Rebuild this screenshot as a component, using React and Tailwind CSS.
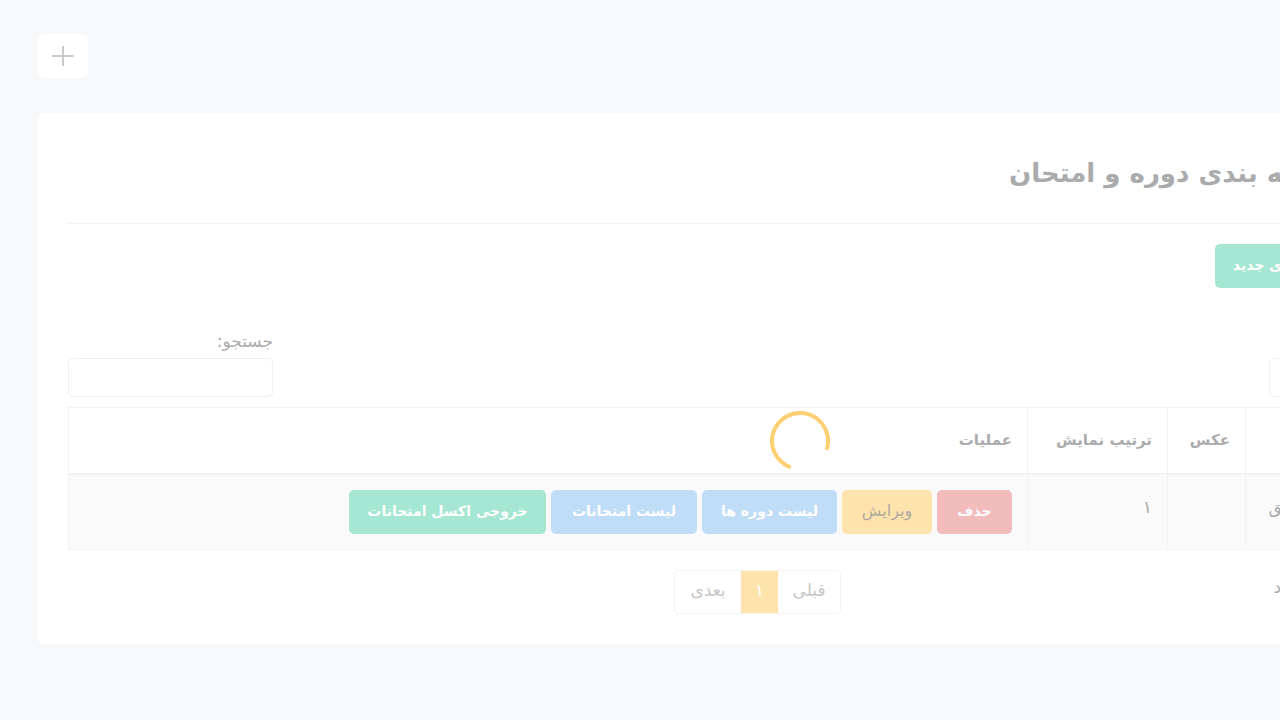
import { useState } from "react";

const actions = [
  { label: "حذف", width: "w-[75px]", color: "bg-[#f2bbbc] text-sm text-white font-bold" },
  { label: "ویرایش", width: "w-[90px]", color: "bg-[#ffe3ad] text-base text-[#aca89f]" },
  { label: "لیست دوره ها", width: "w-[135px]", color: "bg-[#c0ddf8] text-sm text-white font-bold" },
  { label: "لیست امتحانات", width: "w-[146px]", color: "bg-[#c0ddf8] text-sm text-white font-bold" },
  { label: "خروجی اکسل امتحانات", width: "w-[197px]", color: "bg-[#a5e7d2] text-sm text-white font-bold" },
];

function Spinner() {
  return (
    <div className="fixed left-[770px] top-[411px]" role="status" aria-label="loading">
      <svg width="60" height="60" viewBox="0 0 60 60" fill="none" stroke="#ffcf74" strokeWidth="4">
        <path d="M20.8 56.4 A28 28 0 1 1 56.6 38.8" />
      </svg>
    </div>
  );
}

function ActionButton({ label, width, color }) {
  return (
    <button type="button" className={`h-11 shrink-0 rounded-[5px] pb-0.5 whitespace-nowrap ${width} ${color}`}>
      {label}
    </button>
  );
}

export default function App() {
  const [search, setSearch] = useState("");

  return (
    <div className="min-h-screen overflow-hidden bg-[#f7f8fa] font-['DejaVu_Sans',sans-serif] text-[17px] text-[#a9abac]">
      <main dir="rtl" className="ml-[38px] mr-[-90px] pt-[34px]">
        <div className="flex justify-end">
          <button type="button" aria-label="منو" className="flex h-11 w-[50px] items-center justify-center rounded-[5px] bg-white">
            <svg width="22" height="22" viewBox="0 0 22 22" stroke="#c9cbcc" strokeWidth="2">
              <path d="M11 1V21M0 11H22" />
            </svg>
          </button>
        </div>

        <section className="mt-[35px] rounded-[5px] bg-white p-[30px]">
          <h1 className="border-b border-[#f3f3f4] pt-[10px] pr-2 pb-[30px] text-[26px] leading-10 font-bold whitespace-nowrap">
            دسته بندی دوره و امتحان
          </h1>

          <button type="button" className="mt-5 block h-11 w-[125px] rounded-[5px] bg-[#a5e7d2] pb-0.5 text-sm font-bold whitespace-nowrap text-white">
            دسته ی جدید
          </button>

          <div className="mt-9 flex items-end justify-between">
            <select aria-label="تعداد نمایش" className="h-[39px] w-[71px] appearance-none rounded-[5px] border border-[#efefef] bg-white px-3">
              <option>۱۰</option>
            </select>
            <label className="flex w-[205px] flex-col leading-[34px]">
              جستجو:
              <input
                type="search"
                value={search}
                onChange={(e) => setSearch(e.target.value)}
                className="h-[39px] rounded-[5px] border border-[#efefef] bg-white px-3 outline-none"
              />
            </label>
          </div>

          <table className="mt-[10px] w-full table-fixed border-collapse border border-[#f2f2f3] text-right">
            <colgroup>
              <col className="w-[94px]" />
              <col className="w-[78px]" />
              <col className="w-[140px]" />
              <col />
            </colgroup>
            <thead>
              <tr className="h-[66px] border-b-2 border-[#f2f2f3] text-[15px] whitespace-nowrap">
                <th className="border-x border-[#f2f2f3] px-[15px]">نام</th>
                <th className="border-x border-[#f2f2f3] px-[15px]">عکس</th>
                <th className="border-x border-[#f2f2f3] px-[15px]">ترتیب نمایش</th>
                <th className="border-x border-[#f2f2f3] px-[15px]">عملیات</th>
              </tr>
            </thead>
            <tbody>
              <tr className="bg-[#fafafa] align-top leading-[34px]">
                <td className="border-x border-[#f2f2f3] px-[15px] py-[15px] whitespace-nowrap">مصادیق</td>
                <td className="border-x border-[#f2f2f3] px-[15px] py-[15px]"></td>
                <td className="border-x border-[#f2f2f3] px-[15px] py-[15px]">۱</td>
                <td className="border-x border-[#f2f2f3] px-[15px] py-[15px]">
                  <div className="flex gap-[5px]">
                    {actions.map((action) => (
                      <ActionButton key={action.label} {...action} />
                    ))}
                  </div>
                </td>
              </tr>
            </tbody>
          </table>

          <div className="mt-5 flex">
            <p className="w-[499px] leading-[34px]">از ۱ مورد</p>
            <nav className="flex h-11 overflow-hidden rounded-[5px] border border-[#f3f3f4] text-[#c6c7c8]">
              <button type="button" className="w-[62px] pb-0.5">قبلی</button>
              <button type="button" className="-my-px w-[37px] bg-[#ffe3ad] pb-0.5 text-white">۱</button>
              <button type="button" className="w-[66px] pb-0.5">بعدی</button>
            </nav>
          </div>
        </section>
      </main>

      <Spinner />
    </div>
  );
}
